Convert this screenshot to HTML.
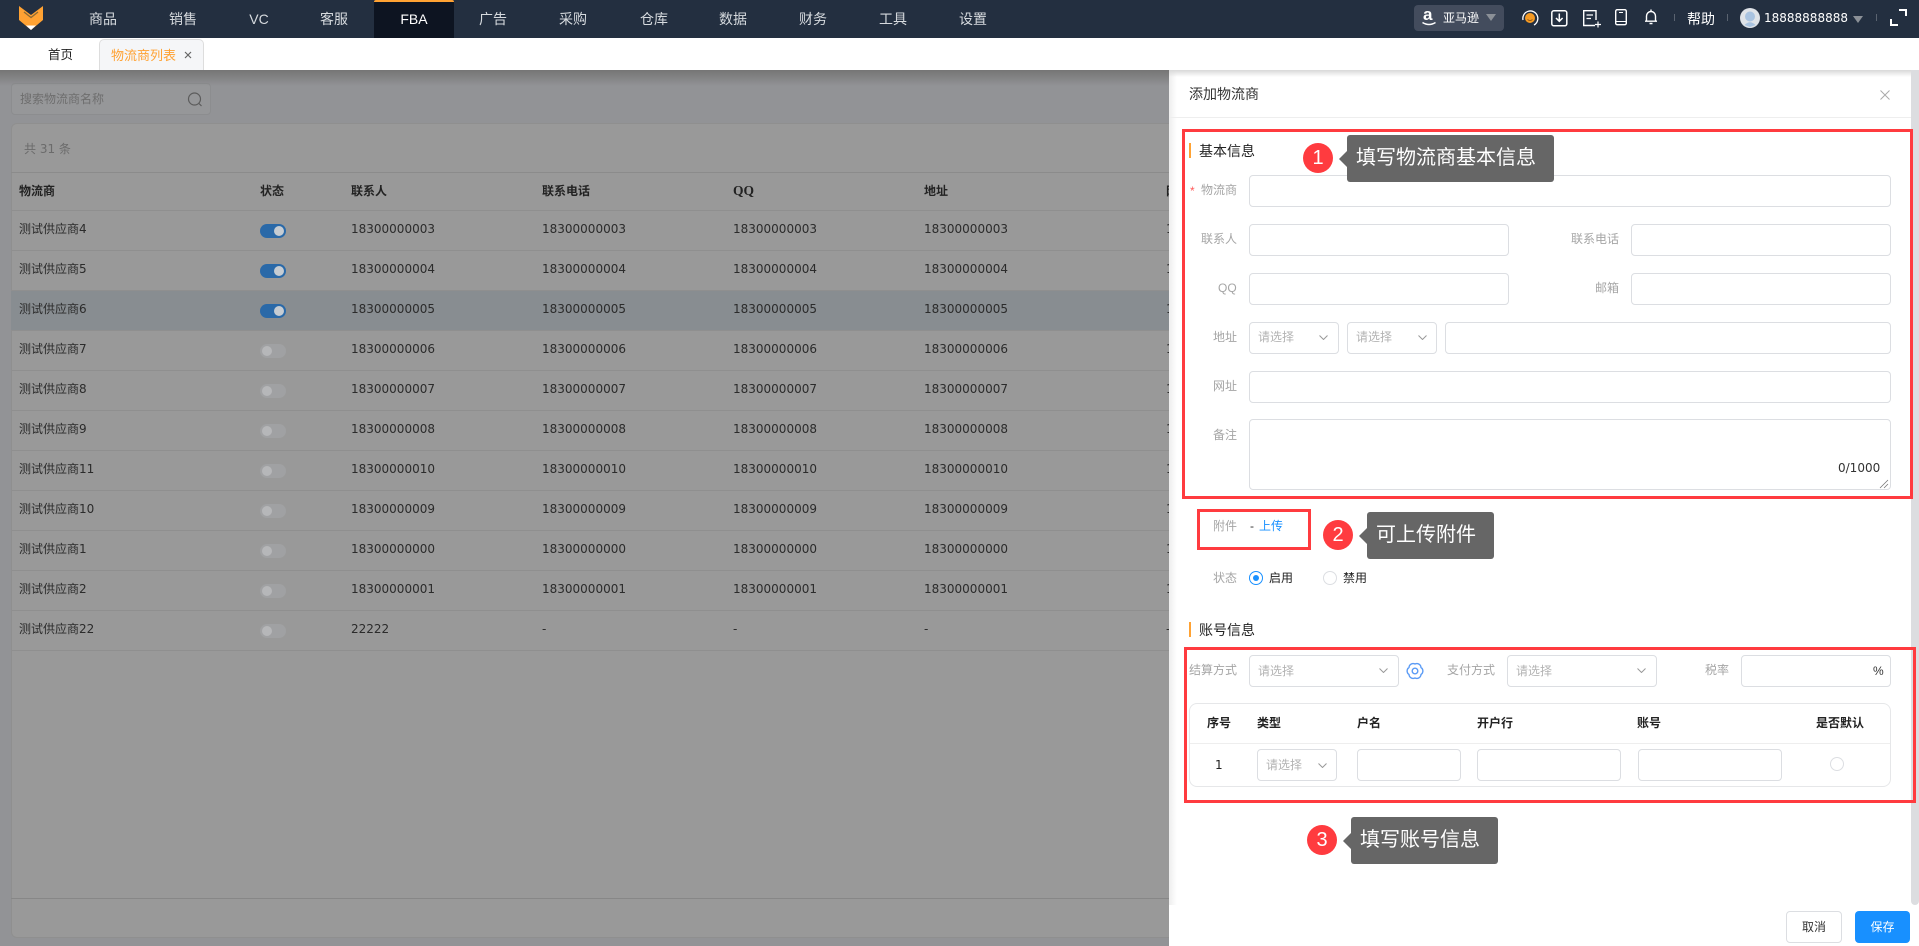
<!DOCTYPE html>
<html lang="zh"><head><meta charset="utf-8"><title>添加物流商</title>
<style>
*{box-sizing:border-box;margin:0;padding:0}
html,body{width:1919px;height:946px;overflow:hidden;background:#fff}
body{position:relative;font-family:"Liberation Sans","Noto Sans CJK SC",sans-serif;font-size:12px;color:#333}
.a{position:absolute}
.t{position:absolute;white-space:nowrap;line-height:20px;height:20px}
.n{position:absolute;top:9px;font-size:14px;line-height:20px;color:#d6dade;white-space:nowrap;transform:translateX(-50%)}
.nr{position:absolute;top:70px;left:0;width:1169px;height:876px;background:#929396;overflow:hidden}
.d{font-family:"DejaVu Sans","Noto Sans CJK SC",sans-serif}
.row{position:absolute;left:11px;width:1158px;height:40px;border-bottom:1px solid #8f8f8f;color:#2b2b2b}
.row span{position:absolute;top:8px;line-height:20px;white-space:nowrap;font-family:"DejaVu Sans","Noto Sans CJK SC",sans-serif}
.row i{position:absolute;left:249px;top:13px;width:26px;height:14px;border-radius:7px;background:#a0a1a3}
.row i:after{content:"";position:absolute;left:2px;top:2px;width:10px;height:10px;border-radius:50%;background:#b6b7b9}
.row i.on{background:#2a69a8}
.row i.on:after{left:14px;background:#c6ccd2}
.h{position:absolute;top:181px;font-weight:bold;line-height:20px;color:#222;white-space:nowrap}
.b{position:absolute;background:#fff;border:1px solid #dcdee2;border-radius:4px;height:32px}
.l{position:absolute;white-space:nowrap;line-height:20px;color:#a5a5a5;text-align:right}
.p{position:absolute;white-space:nowrap;line-height:20px;color:#b3b3b3}
.c{position:absolute;width:9px;height:5px}
.bar{position:absolute;left:1189px;width:2px;height:15px;background:#ffa233}
.sec{position:absolute;left:1199px;font-size:14px;line-height:20px;color:#222;white-space:nowrap}
.red{position:absolute;border:3px solid #ff3b3f}
.num{position:absolute;width:30px;height:30px;border-radius:50%;background:#ff3b3f;color:#fff;font-size:20px;line-height:30px;text-align:center}
.tip{position:absolute;background:#666;border-radius:3px;color:#fff;font-size:20px;line-height:47px;height:47px;white-space:nowrap}
.tip:before{content:"";position:absolute;left:-8px;top:16px;border-style:solid;border-width:8px 8px 8px 0;border-color:transparent #666 transparent transparent}
.th{position:absolute;top:713px;font-weight:bold;line-height:20px;color:#222;white-space:nowrap}
</style></head><body>

<!-- top nav -->
<div class="a" style="left:0;top:0;width:1919px;height:38px;background:#232f40"></div>
<div class="a" style="left:374px;top:0;width:80px;height:38px;background:#0d1421;border-top:2px solid #ffa233;border-radius:2px 2px 0 0"></div>
<svg class="a" style="left:0;top:0" width="60" height="38"><polygon points="19,6 31,15 43,6 43,20 31,30 19,20" fill="#ffa233"/><polyline points="24,12 31,17.500 38,12" fill="none" stroke="#8a6a35" stroke-width="1.300"/><polygon points="26,25.500 36,25.500 31,30" fill="#fff"/></svg>
<div class="n" style="left:103px">商品</div>
<div class="n" style="left:183px">销售</div>
<div class="n" style="left:259px">VC</div>
<div class="n" style="left:334px">客服</div>
<div class="n" style="left:414px;color:#fff">FBA</div>
<div class="n" style="left:493px">广告</div>
<div class="n" style="left:573px">采购</div>
<div class="n" style="left:654px">仓库</div>
<div class="n" style="left:733px">数据</div>
<div class="n" style="left:813px">财务</div>
<div class="n" style="left:893px">工具</div>
<div class="n" style="left:973px">设置</div>

<!-- nav right -->
<div class="a" style="left:1414px;top:5px;width:90px;height:26px;background:#434c5d;border-radius:4px"></div>
<div class="a" style="left:1423px;top:6px;font-size:17px;font-weight:bold;color:#fff;line-height:18px">a</div>
<svg class="a" style="left:1421px;top:21px" width="16" height="6"><path d="M1.500 1.500Q8 5.500 14.500 1.500" fill="none" stroke="#fff" stroke-width="1.500"/></svg>
<div class="t" style="left:1443px;top:8px;color:#fff">亚马逊</div>
<div class="a" style="left:1486px;top:14px;border-style:solid;border-width:7px 5px 0;border-color:#8b9097 transparent transparent"></div>
<svg class="a" style="left:1520px;top:8px" width="20" height="20"><path d="M3 12A7.500 7.500 0 1 1 14 17" fill="none" stroke="#fff" stroke-width="1.300"/><circle cx="10" cy="10" r="5" fill="#f59a23"/><path d="M7.500 11.500Q10 13.500 12.500 11.500" fill="none" stroke="#7a4a10" stroke-width=".8"/></svg>
<svg class="a" style="left:1550px;top:9px" width="19" height="19"><rect x="1.800" y="1.800" width="15" height="15" rx="2" fill="none" stroke="#fff" stroke-width="1.500"/><path d="M9.300 4.500V12M6 9l3.300 3.300L12.600 9" fill="none" stroke="#fff" stroke-width="1.500"/></svg>
<svg class="a" style="left:1582px;top:9px" width="20" height="19"><path d="M13 16.500H1.700V1.700H14V11" fill="none" stroke="#fff" stroke-width="1.400"/><path d="M4.500 6H11M4.500 9.500H9" stroke="#fff" stroke-width="1.200"/><path d="M13 15.500h6M16 12.500v6" stroke="#fff" stroke-width="1.200"/></svg>
<svg class="a" style="left:1614px;top:8px" width="14" height="18"><rect x="1.700" y="1.700" width="10.600" height="15" rx="1.500" fill="none" stroke="#fff" stroke-width="1.400"/><path d="M1.700 13.500H12.300M5 4.500H9" stroke="#fff" stroke-width="1.100"/></svg>
<svg class="a" style="left:1643px;top:8px" width="16" height="18"><path d="M2 13.200H14M3.500 13V8A4.500 4.500 0 0 1 12.500 8V13" fill="none" stroke="#fff" stroke-width="1.400"/><path d="M8 1.500V3.500M6.500 15.500H9.500" stroke="#fff" stroke-width="1.400"/></svg>
<div class="a" style="left:1674px;top:14px;width:1px;height:7px;background:#5a6370"></div>
<div class="t" style="left:1687px;top:9px;font-size:14px;color:#fff">帮助</div>
<div class="a" style="left:1727px;top:14px;width:1px;height:7px;background:#5a6370"></div>
<svg class="a" style="left:1740px;top:8px" width="20" height="20"><circle cx="10" cy="10" r="10" fill="#dfe3e8"/><circle cx="10" cy="8.500" r="5" fill="#a9c3e0"/><path d="M4.500 17Q10 11.500 15.500 17L10 19Z" fill="#a9c3e0"/></svg>
<div class="t d" style="left:1764px;top:8px;color:#fff">18888888888</div>
<div class="a" style="left:1853px;top:16px;border-style:solid;border-width:7px 5px 0;border-color:#8b9097 transparent transparent"></div>
<div class="a" style="left:1876px;top:14px;width:1px;height:7px;background:#5a6370"></div>
<svg class="a" style="left:1889px;top:8px" width="20" height="19"><path d="M10 2H17V8M9 17H2V11" fill="none" stroke="#fff" stroke-width="2"/></svg>

<!-- tabs -->
<div class="t" style="left:48px;top:45px;font-size:12.500px;color:#222">首页</div>
<div class="a" style="left:99px;top:39px;width:105px;height:31px;background:#f5f6f8;border:1px solid #ddd;border-bottom:0;border-radius:5px 5px 0 0"></div>
<div class="t" style="left:111px;top:46px;font-size:13px;color:#ffa233">物流商列表</div>
<svg class="a" style="left:184px;top:51px" width="8" height="8"><path d="M1 1L7 7M7 1L1 7" stroke="#666" stroke-width="1.200"/></svg>

<!-- dimmed page -->
<div class="nr"></div>
<div class="a" style="left:11px;top:83px;width:200px;height:32px;background:#969799;border:1px solid #8c8d8f;border-radius:4px"></div>
<div class="t" style="left:20px;top:89px;color:#6e6e6e">搜索物流商名称</div>
<svg class="a" style="left:186px;top:91px" width="18" height="18"><circle cx="8.500" cy="8" r="6" fill="none" stroke="#5c5c5c" stroke-width="1.200"/><path d="M13 12.500L15.500 15" stroke="#5c5c5c" stroke-width="1.200"/></svg>
<div class="a" style="left:11px;top:123px;width:1158px;height:815px;background:#999;border:1px solid #8f8f8f;border-right:0;border-radius:6px 0 0 6px"></div>
<div class="t d" style="left:24px;top:139px;color:#6b6b6b">共 31 条</div>
<div class="a" style="left:11px;top:172px;width:1158px;height:1px;background:#8b8b8b"></div>
<div class="a" style="left:11px;top:210px;width:1158px;height:1px;background:#8f8f8f"></div>
<div class="a" style="left:11px;top:898px;width:1158px;height:1px;background:#878787"></div>
<div class="h" style="left:19px">物流商</div>
<div class="h" style="left:260px">状态</div>
<div class="h" style="left:351px">联系人</div>
<div class="h" style="left:542px">联系电话</div>
<div class="h" style="left:733px;font-family:'Liberation Serif',serif;font-size:13.500px">QQ</div>
<div class="h" style="left:924px">地址</div>
<div class="h" style="left:1166px">网址</div>

<div class="row" style="top:211px"><span style="left:8px">测试供应商4</span><i class="on"></i><span style="left:340px">18300000003</span><span style="left:531px">18300000003</span><span style="left:722px">18300000003</span><span style="left:913px">18300000003</span><span style="left:1155px">18300000003</span></div>
<div class="row" style="top:251px"><span style="left:8px">测试供应商5</span><i class="on"></i><span style="left:340px">18300000004</span><span style="left:531px">18300000004</span><span style="left:722px">18300000004</span><span style="left:913px">18300000004</span><span style="left:1155px">18300000004</span></div>
<div class="row" style="top:291px;background:#888d91"><span style="left:8px">测试供应商6</span><i class="on"></i><span style="left:340px">18300000005</span><span style="left:531px">18300000005</span><span style="left:722px">18300000005</span><span style="left:913px">18300000005</span><span style="left:1155px">18300000005</span></div>
<div class="row" style="top:331px"><span style="left:8px">测试供应商7</span><i></i><span style="left:340px">18300000006</span><span style="left:531px">18300000006</span><span style="left:722px">18300000006</span><span style="left:913px">18300000006</span><span style="left:1155px">18300000006</span></div>
<div class="row" style="top:371px"><span style="left:8px">测试供应商8</span><i></i><span style="left:340px">18300000007</span><span style="left:531px">18300000007</span><span style="left:722px">18300000007</span><span style="left:913px">18300000007</span><span style="left:1155px">18300000007</span></div>
<div class="row" style="top:411px"><span style="left:8px">测试供应商9</span><i></i><span style="left:340px">18300000008</span><span style="left:531px">18300000008</span><span style="left:722px">18300000008</span><span style="left:913px">18300000008</span><span style="left:1155px">18300000008</span></div>
<div class="row" style="top:451px"><span style="left:8px">测试供应商11</span><i></i><span style="left:340px">18300000010</span><span style="left:531px">18300000010</span><span style="left:722px">18300000010</span><span style="left:913px">18300000010</span><span style="left:1155px">18300000010</span></div>
<div class="row" style="top:491px"><span style="left:8px">测试供应商10</span><i></i><span style="left:340px">18300000009</span><span style="left:531px">18300000009</span><span style="left:722px">18300000009</span><span style="left:913px">18300000009</span><span style="left:1155px">18300000009</span></div>
<div class="row" style="top:531px"><span style="left:8px">测试供应商1</span><i></i><span style="left:340px">18300000000</span><span style="left:531px">18300000000</span><span style="left:722px">18300000000</span><span style="left:913px">18300000000</span><span style="left:1155px">18300000000</span></div>
<div class="row" style="top:571px"><span style="left:8px">测试供应商2</span><i></i><span style="left:340px">18300000001</span><span style="left:531px">18300000001</span><span style="left:722px">18300000001</span><span style="left:913px">18300000001</span><span style="left:1155px">18300000001</span></div>
<div class="row" style="top:611px"><span style="left:8px">测试供应商22</span><i></i><span style="left:340px">22222</span><span style="left:531px">-</span><span style="left:722px">-</span><span style="left:913px">-</span><span style="left:1155px">-</span></div>

<div class="a" style="left:0;top:70px;width:1169px;height:16px;background:linear-gradient(#757575,rgba(117,117,117,0))"></div>

<!-- drawer -->
<div class="a" style="left:1169px;top:70px;width:750px;height:876px;background:#fff"></div>
<div class="a" style="left:1169px;top:70px;width:8px;height:876px;background:linear-gradient(90deg,#eee,#fff)"></div>
<div class="a" style="left:1169px;top:70px;width:750px;height:7px;background:linear-gradient(#d8d8d8,rgba(255,255,255,0))"></div>
<div class="a" style="left:1911px;top:70px;width:8px;height:835px;background:#dcdde0;border-radius:0 0 4px 4px"></div>
<div class="t" style="left:1189px;top:84px;font-size:14px;color:#333">添加物流商</div>
<svg class="a" style="left:1880px;top:90px" width="10" height="10"><path d="M.5.5L9.500 9.500M9.500.5L.5 9.500" stroke="#aaa" stroke-width="1"/></svg>
<div class="a" style="left:1169px;top:117px;width:742px;height:1px;background:#eee"></div>

<div class="bar" style="top:143px"></div>
<div class="sec" style="top:141px">基本信息</div>

<div class="t" style="left:1190px;top:181px;color:#ff5a5a">*</div>
<div class="l" style="left:1201px;top:180px">物流商</div>
<div class="b" style="left:1249px;top:175px;width:642px"></div>
<div class="l" style="left:1201px;top:229px">联系人</div>
<div class="b" style="left:1249px;top:224px;width:260px"></div>
<div class="l" style="left:1571px;top:229px">联系电话</div>
<div class="b" style="left:1631px;top:224px;width:260px"></div>
<div class="l" style="left:1218px;top:278px">QQ</div>
<div class="b" style="left:1249px;top:273px;width:260px"></div>
<div class="l" style="left:1595px;top:278px">邮箱</div>
<div class="b" style="left:1631px;top:273px;width:260px"></div>
<div class="l" style="left:1213px;top:327px">地址</div>
<div class="b" style="left:1249px;top:322px;width:90px"></div>
<div class="p" style="left:1258px;top:327px">请选择</div>
<svg class="c" style="left:1319px;top:335px"><path d="M.5.5L4.500 4.500L8.500.5" fill="none" stroke="#999"/></svg>
<div class="b" style="left:1347px;top:322px;width:90px"></div>
<div class="p" style="left:1356px;top:327px">请选择</div>
<svg class="c" style="left:1418px;top:335px"><path d="M.5.5L4.500 4.500L8.500.5" fill="none" stroke="#999"/></svg>
<div class="b" style="left:1445px;top:322px;width:446px"></div>
<div class="l" style="left:1213px;top:376px">网址</div>
<div class="b" style="left:1249px;top:371px;width:642px"></div>
<div class="l" style="left:1213px;top:425px">备注</div>
<div class="b" style="left:1249px;top:419px;width:642px;height:71px"></div>
<div class="t d" style="left:1838px;top:458px;color:#333">0/1000</div>
<svg class="a" style="left:1879px;top:479px" width="10" height="10"><path d="M1 9L9 1M5 9L9 5" stroke="#777" stroke-width=".8"/></svg>

<div class="red" style="left:1182px;top:129px;width:731px;height:370px"></div>
<div class="num" style="left:1303px;top:143px">1</div>
<div class="tip" style="left:1347px;top:135px;width:207px;padding-left:9px">填写物流商基本信息</div>

<div class="l" style="left:1213px;top:516px">附件</div>
<div class="t" style="left:1250px;top:516px;color:#333">-</div>
<div class="t" style="left:1259px;top:516px;color:#1890ff">上传</div>
<div class="red" style="left:1197px;top:509px;width:114px;height:41px"></div>
<div class="num" style="left:1323px;top:520px">2</div>
<div class="tip" style="left:1367px;top:512px;width:127px;padding-left:9px">可上传附件</div>

<div class="l" style="left:1213px;top:568px">状态</div>
<div class="a" style="left:1249px;top:571px;width:14px;height:14px;border:1px solid #1890ff;border-radius:50%;background:#fff"></div>
<div class="a" style="left:1253px;top:575px;width:6px;height:6px;border-radius:50%;background:#1890ff"></div>
<div class="t" style="left:1269px;top:568px;color:#222">启用</div>
<div class="a" style="left:1323px;top:571px;width:14px;height:14px;border:1px solid #dcdee2;border-radius:50%;background:#fff"></div>
<div class="t" style="left:1343px;top:568px;color:#222">禁用</div>

<div class="bar" style="top:622px"></div>
<div class="sec" style="top:620px">账号信息</div>

<div class="l" style="left:1189px;top:660px">结算方式</div>
<div class="b" style="left:1249px;top:655px;width:150px"></div>
<div class="p" style="left:1258px;top:661px">请选择</div>
<svg class="c" style="left:1379px;top:668px"><path d="M.5.5L4.500 4.500L8.500.5" fill="none" stroke="#999"/></svg>
<svg class="a" style="left:1406px;top:662px" width="18" height="18"><path d="M9 2A4.200 4.200 0 0 1 15 5.500A4.200 4.200 0 0 1 15 12.500A4.200 4.200 0 0 1 9 16A4.200 4.200 0 0 1 3 12.500A4.200 4.200 0 0 1 3 5.500A4.200 4.200 0 0 1 9 2Z" fill="none" stroke="#5b9bf5" stroke-width="1.400"/><circle cx="9" cy="9" r="2.800" fill="none" stroke="#5b9bf5" stroke-width="1.400"/></svg>
<div class="l" style="left:1447px;top:660px">支付方式</div>
<div class="b" style="left:1507px;top:655px;width:150px"></div>
<div class="p" style="left:1516px;top:661px">请选择</div>
<svg class="c" style="left:1637px;top:668px"><path d="M.5.5L4.500 4.500L8.500.5" fill="none" stroke="#999"/></svg>
<div class="l" style="left:1705px;top:660px">税率</div>
<div class="b" style="left:1741px;top:655px;width:150px"></div>
<div class="t" style="left:1873px;top:661px;color:#333">%</div>

<div class="a" style="left:1189px;top:703px;width:702px;height:84px;border:1px solid #e6e7e9;border-radius:8px"></div>
<div class="a" style="left:1190px;top:743px;width:700px;height:1px;background:#eee"></div>
<div class="th" style="left:1207px">序号</div>
<div class="th" style="left:1257px">类型</div>
<div class="th" style="left:1357px">户名</div>
<div class="th" style="left:1477px">开户行</div>
<div class="th" style="left:1637px">账号</div>
<div class="th" style="left:1816px">是否默认</div>
<div class="t d" style="left:1215px;top:755px;color:#222">1</div>
<div class="b" style="left:1257px;top:749px;width:80px"></div>
<div class="p" style="left:1266px;top:755px">请选择</div>
<svg class="c" style="left:1318px;top:763px"><path d="M.5.5L4.500 4.500L8.500.5" fill="none" stroke="#999"/></svg>
<div class="b" style="left:1357px;top:749px;width:104px"></div>
<div class="b" style="left:1477px;top:749px;width:144px"></div>
<div class="b" style="left:1638px;top:749px;width:144px"></div>
<div class="a" style="left:1830px;top:757px;width:14px;height:14px;border:1px solid #dcdee2;border-radius:50%"></div>

<div class="red" style="left:1184px;top:647px;width:732px;height:156px"></div>
<div class="num" style="left:1307px;top:825px">3</div>
<div class="tip" style="left:1351px;top:817px;width:147px;padding-left:9px">填写账号信息</div>

<!-- footer -->
<div class="a" style="left:1169px;top:905px;width:750px;height:41px;background:#fff"></div>
<div class="a" style="left:1786px;top:911px;width:56px;height:32px;border:1px solid #dcdee2;border-radius:4px;background:#fff;text-align:center;line-height:30px;color:#333">取消</div>
<div class="a" style="left:1855px;top:911px;width:55px;height:32px;border-radius:4px;background:#1890ff;text-align:center;line-height:32px;color:#fff">保存</div>
</body></html>
